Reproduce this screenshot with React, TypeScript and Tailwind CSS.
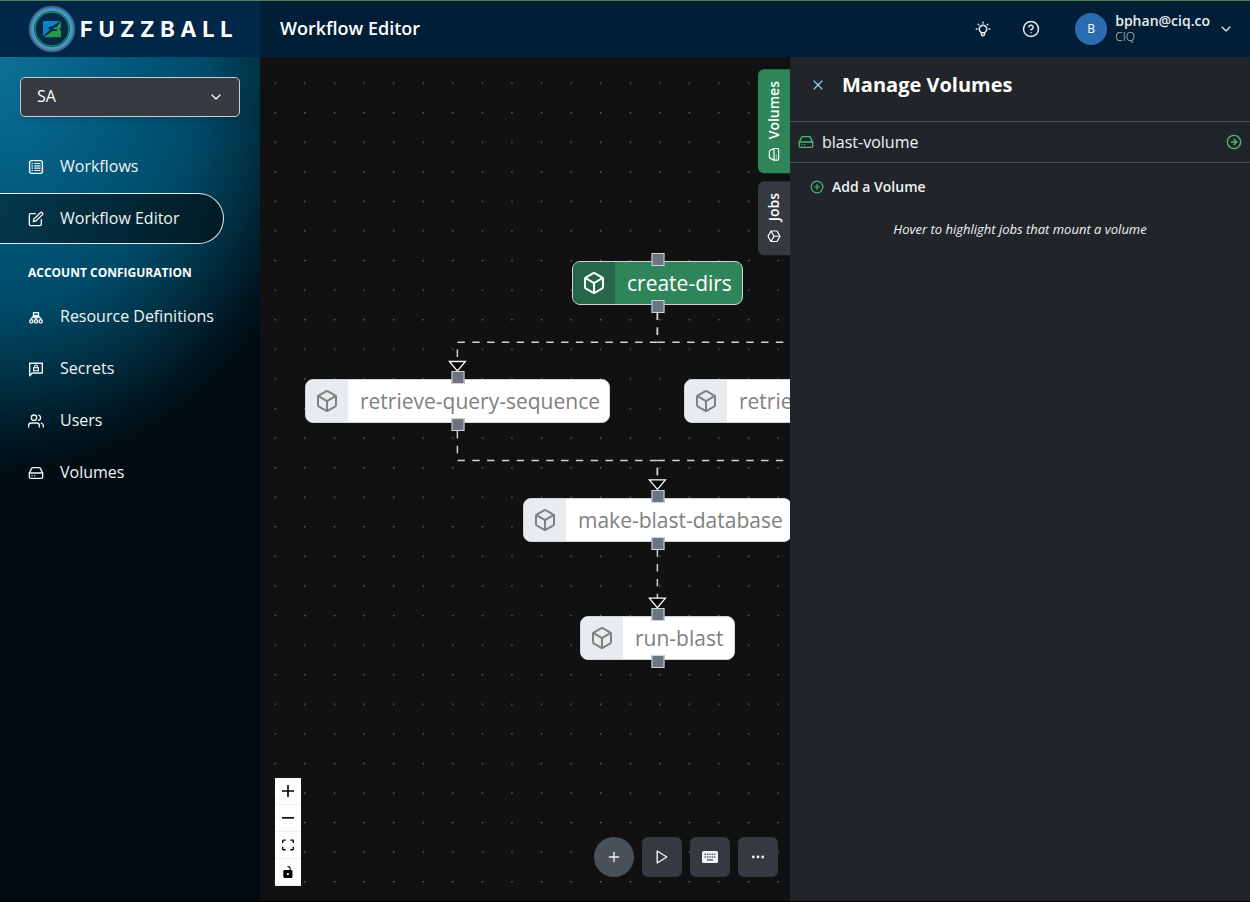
import type { ReactNode } from 'react';
import { FiArrowRightCircle, FiBox, FiEdit, FiHardDrive, FiHelpCircle, FiPlusCircle, FiUsers } from 'react-icons/fi';
import { TbBulb } from 'react-icons/tb';
import { ChevronDown, Plus, X } from 'lucide-react';

/* ---------- icons ---------- */

function Logo() {
  return (
    <svg width="48" height="48" viewBox="0 0 48 48" aria-hidden="true">
      <defs>
        <radialGradient id="halo">
          <stop offset="0.74" stopColor="#2f9bd0" />
          <stop offset="0.83" stopColor="#4a9ccc" />
          <stop offset="0.92" stopColor="#4a7396" />
          <stop offset="1" stopColor="#1c4a72" />
        </radialGradient>
      </defs>
      <circle cx="24" cy="24" r="23.500" fill="url(#halo)" />
      <circle cx="24" cy="24" r="17.800" fill="#04284a" />
      <circle cx="24" cy="24" r="16.800" fill="none" stroke="#1f8a4c" strokeWidth="1.300" />
      <path d="M15 16h17.500L24 21.500h-2.500L20 24h2.500L15 31.500z" fill="#0b84c6" />
      <path d="M33 16.500V22.500l-1.500 1.700L33 26v6.200H16l8.500-6.200h4l1.500-1.800h-5.500l2-2h2z" fill="#259b47" />
    </svg>
  );
}

function ListIcon() {
  return (
    <svg width="16" height="16" viewBox="0 0 16 16" fill="none" stroke="currentColor" aria-hidden="true">
      <rect x="1.600" y="1.600" width="12.800" height="12.800" rx="1.800" strokeWidth="1.400" />
      <path d="M3.500 4.500H5M3.500 6.800H5M3.500 9.200H5M3.500 11.500H5M6.300 4.500h6.200M6.300 6.800h6.200M6.300 9.200h6.200M6.300 11.500h6.200" strokeWidth="1.200" />
    </svg>
  );
}

function ClusterIcon() {
  return (
    <svg width="16" height="16" viewBox="0 0 16 16" fill="none" stroke="currentColor" strokeWidth="1.300" aria-hidden="true">
      <rect x="5.500" y="3.700" width="5" height="2.800" />
      <path d="M8 6.700V11M3.300 11V9.500l2-2h5.400l2 2V11M5.500 8.500h5" />
      <rect x="1.800" y="10.800" width="3" height="3" rx="0.800" />
      <rect x="6.500" y="10.800" width="3" height="3" rx="0.800" />
      <rect x="11.200" y="10.800" width="3" height="3" rx="0.800" />
    </svg>
  );
}

function SecretIcon() {
  return (
    <svg width="16" height="16" viewBox="0 0 16 16" fill="none" stroke="currentColor" strokeWidth="1.400" aria-hidden="true">
      <path d="M1.700 14.800V2.200h12.600v9.800H4.200z" strokeLinejoin="round" />
      <rect x="5.600" y="6.700" width="4.800" height="3" strokeWidth="1.200" />
      <path d="M6.600 6.500V5.400a1.400 1.400 0 0 1 2.800 0v1.100" strokeWidth="1.200" />
    </svg>
  );
}

function PlayIcon() {
  return (
    <svg width="16" height="16" viewBox="0 0 16 16" fill="none" stroke="currentColor" strokeWidth="1.400" strokeLinejoin="round" aria-hidden="true">
      <path d="M3.200 2v12l9.600-6z" />
    </svg>
  );
}

function KeyboardIcon() {
  return (
    <svg width="16" height="16" viewBox="0 0 16 16" aria-hidden="true">
      <rect y="2" width="16" height="12" rx="1.500" fill="#f1f3f5" />
      <g fill="#53595f">
        <path d="M2.500 4.600h1.400v1.400h-1.400zM4.900 4.600h1.400v1.400H4.900zM7.300 4.600h1.400v1.400H7.300zM9.700 4.600h1.400v1.400H9.700zM12.100 4.600h1.400v1.400h-1.400z" />
        <path d="M2.500 7.300h1.400v1.400h-1.400zM4.900 7.300h1.400v1.400H4.900zM7.300 7.300h1.400v1.400H7.300zM9.700 7.300h1.400v1.400H9.700zM12.100 7.300h1.400v1.400h-1.400z" />
        <path d="M5 10.200h6v1.400H5z" />
      </g>
    </svg>
  );
}

function DotsIcon() {
  return (
    <svg width="16" height="16" viewBox="0 0 16 16" fill="currentColor" aria-hidden="true">
      <circle cx="3.300" cy="8" r="1.400" />
      <circle cx="8" cy="8" r="1.400" />
      <circle cx="12.700" cy="8" r="1.400" />
    </svg>
  );
}

/* ---------- sidebar ---------- */

function NavItem({ icon, label, active }: { icon: ReactNode; label: string; active?: boolean }) {
  return (
    <a
      href="#"
      aria-current={active ? 'page' : undefined}
      className={
        active
          ? 'flex h-[51px] w-56 items-center gap-4 rounded-r-full border border-l-0 border-[#e3e9ec] bg-[linear-gradient(110deg,#04384c,#011a25)] pl-7 text-base text-[#f1f3f5]'
          : 'flex h-[51px] w-56 items-center gap-4 pl-7 text-base text-[#f1f3f5]'
      }
    >
      {icon}
      <span className="pb-0.5">{label}</span>
    </a>
  );
}

function Sidebar() {
  return (
    <aside className="flex w-[260px] shrink-0 flex-col bg-[#000c11] bg-[radial-gradient(ellipse_345px_420px_at_0_0,#0d7096_0%,#07648a_20%,#005678_40%,#004a68_60%,#002e40_78%,#001620_92%,#000c11_100%)]">
      <div className="relative mx-5 mt-5">
        <select
          aria-label="Account"
          className="h-10 w-full appearance-none rounded-[5px] border border-[#c9ccd0] bg-[#363940] px-4 pb-0.5 text-base font-medium text-white shadow-md"
        >
          <option>SA</option>
        </select>
        <ChevronDown size={16} strokeWidth={2} className="pointer-events-none absolute right-4 top-3 text-white" />
      </div>
      <nav className="mt-6 flex flex-col gap-px">
        <NavItem icon={<ListIcon />} label="Workflows" />
        <NavItem icon={<FiEdit size={16} />} label="Workflow Editor" active />
        <h2 className="pb-[11px] pl-7 pt-[22px] text-xs/3 font-bold text-white">ACCOUNT CONFIGURATION</h2>
        <NavItem icon={<ClusterIcon />} label="Resource Definitions" />
        <NavItem icon={<SecretIcon />} label="Secrets" />
        <NavItem icon={<FiUsers size={16} />} label="Users" />
        <NavItem icon={<FiHardDrive size={16} />} label="Volumes" />
      </nav>
    </aside>
  );
}

/* ---------- header ---------- */

function Header() {
  return (
    <header className="flex h-[57px] shrink-0 border-t border-[#4f7f5a] bg-[#001e36]">
      <div className="flex w-[260px] shrink-0 items-center gap-1 bg-[#002748] pl-7">
        <Logo />
        <span className="font-[Inter,sans-serif] text-[22px] font-bold tracking-[0.25em] text-white">FUZZBALL</span>
      </div>
      <div className="flex flex-1 items-center justify-between pl-5 pr-4">
        <h1 className="pb-0.5 text-lg font-semibold text-white">Workflow Editor</h1>
        <div className="flex items-center text-[#e9ecef]">
          <button type="button" aria-label="Tips" className="flex size-12 items-center justify-center">
            <TbBulb size={18} />
          </button>
          <button type="button" aria-label="Help" className="flex size-12 items-center justify-center">
            <FiHelpCircle size={18} />
          </button>
          <button type="button" className="ml-5 flex items-center gap-2 text-left">
            <span className="flex size-8 items-center justify-center rounded-full bg-[#2b6cb0] text-xs text-white">B</span>
            <span className="flex flex-col">
              <span className="text-sm/4 font-semibold">bphan@ciq.co</span>
              <span className="text-xs/4 font-light text-[#ced4da]">CIQ</span>
            </span>
            <ChevronDown size={16} strokeWidth={1.75} />
          </button>
        </div>
      </div>
    </header>
  );
}

/* ---------- workflow canvas ---------- */

function Handle({ side }: { side: 'top' | 'bottom' }) {
  return (
    <span
      className={
        side === 'top'
          ? 'absolute -top-2 left-1/2 size-[13px] -translate-x-1/2 border border-[#ced4da] bg-[#6c757d]'
          : 'absolute -bottom-2 left-1/2 size-[13px] -translate-x-1/2 border border-[#ced4da] bg-[#6c757d]'
      }
    />
  );
}

function JobNode({ label, place, active }: { label: string; place: string; active?: boolean }) {
  return (
    <div className={`absolute h-11 ${place}`}>
      <div
        className={
          active
            ? 'flex h-full overflow-hidden rounded-lg border border-[#ced4da] bg-[#2f855a] text-white'
            : 'flex h-full overflow-hidden rounded-lg border border-[#ced4da] bg-white text-[#808080]'
        }
      >
        <span
          className={
            active
              ? 'flex w-[42px] shrink-0 items-center justify-center bg-[#276749]'
              : 'flex w-[42px] shrink-0 items-center justify-center bg-[#e9ecef]'
          }
        >
          <FiBox size={24} />
        </span>
        <span className="flex items-center whitespace-nowrap pl-3 pt-0.5 text-[21px]">{label}</span>
      </div>
      <Handle side="top" />
      <Handle side="bottom" />
    </div>
  );
}

function Edges() {
  return (
    <svg className="absolute inset-0 size-full" aria-hidden="true">
      <defs>
        <pattern id="dots" x="14.600" y="25.400" width="29.580" height="29.580" patternUnits="userSpaceOnUse">
          <circle cx="0.750" cy="0.750" r="0.750" fill="#81818a" />
        </pattern>
      </defs>
      <rect width="100%" height="100%" fill="url(#dots)" />
      <g fill="none" stroke="#ced4da" strokeWidth="1.480" strokeDasharray="7.400 7.400">
        <path d="M397.400 255.700V285.200H197.400V304" />
        <path d="M397.400 255.700V285.200H597.400V304" />
        <path d="M197.400 374V403.500H397.400V423" />
        <path d="M597.400 374V403.500H397.400V423" />
        <path d="M397.400 492.300V541" />
      </g>
      <g fill="#000" stroke="#fff" strokeWidth="1.300">
        <path d="M189.400 304.500h16l-8 9.500z" />
        <path d="M389.400 422.800h16l-8 9.500z" />
        <path d="M389.400 541.200h16l-8 9.500z" />
      </g>
    </svg>
  );
}

function ZoomControls() {
  const button = 'flex h-[27px] w-[26px] items-center justify-center border-b border-[#eee] bg-[#fefefe]';
  return (
    <div className="absolute bottom-[15px] left-[15px] flex flex-col">
      <button type="button" aria-label="Zoom in" className={button}>
        <svg width="12" height="12" viewBox="0 0 32 32">
          <path d="M32 18.133H18.133V32h-4.266V18.133H0v-4.266h13.867V0h4.266v13.867H32z" />
        </svg>
      </button>
      <button type="button" aria-label="Zoom out" className={button}>
        <svg width="12" height="2" viewBox="0 0 32 5">
          <path d="M0 0h32v4.200H0z" />
        </svg>
      </button>
      <button type="button" aria-label="Fit view" className={button}>
        <svg width="12" height="12" viewBox="0 0 32 30">
          <path d="M3.692 4.630c0-.53.4-.938.939-.938h5.215V0H4.708C2.130 0 0 2.054 0 4.630v5.216h3.692V4.631zM27.354 0h-5.200v3.692h5.170c.53 0 .984.4.984.939v5.215H32V4.631A4.624 4.624 0 0027.354 0zm.954 24.830c0 .532-.4.940-.939.940h-5.215v3.768h5.215c2.577 0 4.631-2.130 4.631-4.707v-5.139h-3.692v5.139zm-23.677.940c-.531 0-.939-.4-.939-.940v-5.138H0v5.139c0 2.577 2.130 4.707 4.708 4.707h5.138V25.770H4.631z" />
        </svg>
      </button>
      <button type="button" aria-label="Toggle interactivity" className={button}>
        <svg width="10" height="12" viewBox="0 0 25 32">
          <path d="M21.333 10.667H19.810V7.619C19.810 3.429 16.380 0 12.190 0c-4.114 1.828-1.370 2.133.305 2.438 1.676.305 4.420 2.590 4.420 5.181v3.048H3.047A3.056 3.056 0 000 13.714v15.238A3.056 3.056 0 003.048 32h18.285a3.056 3.056 0 003.048-3.048V13.714a3.056 3.056 0 00-3.048-3.047zM12.190 24.533a3.056 3.056 0 01-3.047-3.047 3.056 3.056 0 013.047-3.048 3.056 3.056 0 013.048 3.048 3.056 3.056 0 01-3.048 3.047z" />
        </svg>
      </button>
    </div>
  );
}

function ActionBar() {
  const square = 'flex size-10 items-center justify-center rounded-md bg-[#343a40]';
  return (
    <div className="absolute bottom-6 right-3 flex gap-2 text-[#f1f3f5]">
      <button type="button" aria-label="Add job" className="flex size-10 items-center justify-center rounded-full bg-[#495057]">
        <Plus size={16} strokeWidth={2} />
      </button>
      <button type="button" aria-label="Run" className={square}>
        <PlayIcon />
      </button>
      <button type="button" aria-label="Shortcuts" className={square}>
        <KeyboardIcon />
      </button>
      <button type="button" aria-label="More" className={square}>
        <DotsIcon />
      </button>
    </div>
  );
}

function SideTabs() {
  const tab = 'flex w-8 rotate-180 items-center gap-2 rounded-r-md px-3 py-2 text-sm/4 font-semibold text-white [writing-mode:vertical-rl]';
  return (
    <div className="absolute right-0 top-3 flex flex-col gap-2">
      <button type="button" className={`${tab} bg-[#2f855a]`}>
        <FiHardDrive size={14} className="rotate-90" />
        <span>Volumes</span>
      </button>
      <button type="button" className={`${tab} bg-[#343a40]`}>
        <FiBox size={14} className="rotate-90" />
        <span>Jobs</span>
      </button>
    </div>
  );
}

function Canvas() {
  return (
    <main className="relative flex-1 overflow-hidden bg-[#111]">
      <Edges />
      <JobNode label="create-dirs" place="left-[312px] top-[204px] w-[171px]" active />
      <JobNode label="retrieve-query-sequence" place="left-[45px] top-[322px] w-[305px]" />
      <JobNode label="retrieve" place="left-[424px] top-[322px] w-[347px]" />
      <JobNode label="make-blast-database" place="left-[263px] top-[441px] w-[269px]" />
      <JobNode label="run-blast" place="left-[320px] top-[559px] w-[155px]" />
      <SideTabs />
      <ZoomControls />
      <ActionBar />
    </main>
  );
}

/* ---------- volumes panel ---------- */

function VolumesPanel() {
  return (
    <section className="flex w-[460px] shrink-0 flex-col bg-[#212529] text-[#f1f3f5]">
      <div className="flex h-16 items-start gap-4 px-5 pt-[13px]">
        <button type="button" aria-label="Close" className="mt-[7px] text-[#8fd0f5]">
          <X size={16} strokeWidth={1.75} />
        </button>
        <h2 className="text-xl/[30px] font-bold text-white">Manage Volumes</h2>
      </div>
      <button type="button" className="flex h-[42px] items-center gap-2 border-y border-[#495057] px-2 text-left text-base">
        <FiHardDrive size={16} className="text-[#48bb78]" />
        <span className="flex-1">blast-volume</span>
        <FiArrowRightCircle size={16} className="text-[#48bb78]" />
      </button>
      <button type="button" className="mt-3 flex h-6 items-center gap-2 self-start pl-5 text-sm font-semibold">
        <FiPlusCircle size={14} className="text-[#48bb78]" />
        Add a Volume
      </button>
      <p className="mt-5 text-center text-[13px]/5 italic">Hover to highlight jobs that mount a volume</p>
    </section>
  );
}

export default function App() {
  return (
    <div className="flex h-screen flex-col border-b border-black bg-[#111] font-['Open_Sans',sans-serif]">
      <Header />
      <div className="flex min-h-0 flex-1">
        <Sidebar />
        <Canvas />
        <VolumesPanel />
      </div>
    </div>
  );
}
